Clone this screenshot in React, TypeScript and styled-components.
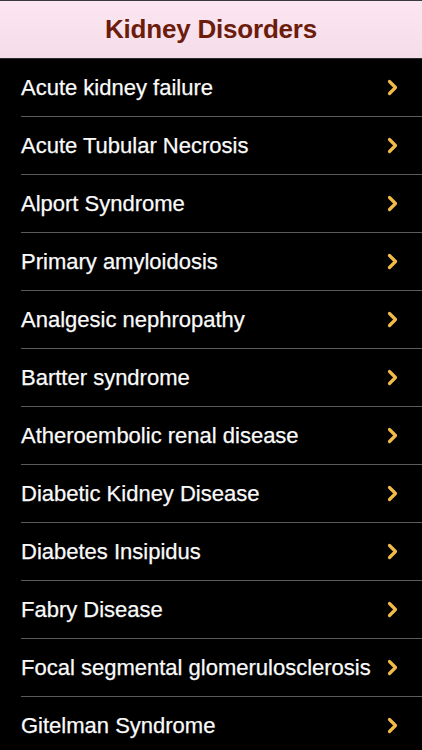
import React from "react";
import styled, { createGlobalStyle } from "styled-components";

const GlobalStyle = createGlobalStyle`
    html, body {
        margin: 0;
        padding: 0;
        background: #000;
    }
    body {
        font-family: "Liberation Sans", Arial, sans-serif;
        -webkit-font-smoothing: antialiased;
    }
`;

const Screen = styled.div`
    width: 422px;
    height: 750px;
    overflow: hidden;
    background: #000;
    display: flex;
    flex-direction: column;
`;

const Header = styled.header`
    height: 57px;
    flex-shrink: 0;
    border-top: 1px solid #3a3a3a;
    border-bottom: 1px solid #2a2a2a;
    background: linear-gradient(#fce6f1, #f4dde8);
    display: flex;
    align-items: center;
    justify-content: center;
    & > h1 {
        margin: 0;
        font-size: 26px;
        font-weight: bold;
        color: #6c1c0c;
        letter-spacing: -0.2px;
    }
`;

const List = styled.ul`
    list-style: none;
    margin: 0;
    padding: 0 0 0 21px;
`;

const Row = styled.li`
    height: 57px;
    display: flex;
    align-items: center;
    justify-content: space-between;
    padding-right: 24px;
    border-bottom: 1px solid #5a5a5a;
    color: #fafafa;
    font-size: 22px;
    -webkit-text-stroke: 0.25px #fafafa;
    & > span {
        white-space: nowrap;
    }
`;

const Chevron = styled.svg`
    width: 11px;
    height: 17px;
    flex-shrink: 0;
    margin-left: 8px;
`;

const items = [
    "Acute kidney failure",
    "Acute Tubular Necrosis",
    "Alport Syndrome",
    "Primary amyloidosis",
    "Analgesic nephropathy",
    "Bartter syndrome",
    "Atheroembolic renal disease",
    "Diabetic Kidney Disease",
    "Diabetes Insipidus",
    "Fabry Disease",
    "Focal segmental glomerulosclerosis",
    "Gitelman Syndrome",
];

const App: React.FC = () => {
    return (
        <Screen>
            <GlobalStyle />
            <Header>
                <h1>Kidney Disorders</h1>
            </Header>
            <List>
                {items.map((name) => (
                    <Row key={name}>
                        <span>{name}</span>
                        <Chevron viewBox="0 0 11 17">
                            <path d="M2.5 2.5 L8.5 8.5 L2.5 14.5" fill="none" stroke="#f2bb45" strokeWidth="3.2" strokeLinecap="round" strokeLinejoin="round" />
                        </Chevron>
                    </Row>
                ))}
            </List>
        </Screen>
    );
};

export default App;
